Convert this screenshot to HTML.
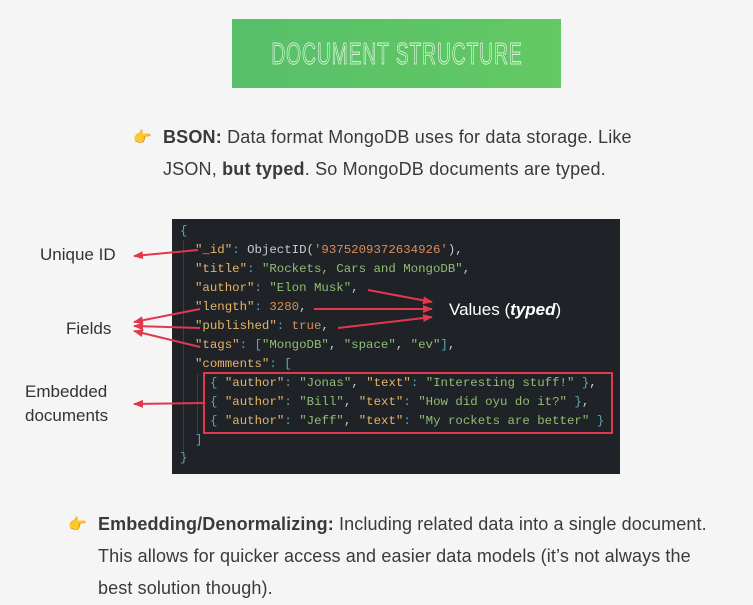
<!DOCTYPE html>
<html><head><meta charset="utf-8"><style>
body{margin:0;width:753px;height:605px;background:#f5f5f5;position:relative;overflow:hidden;font-family:"Liberation Sans",sans-serif;color:#333}
.t{position:absolute;white-space:nowrap}
.title{position:absolute;left:232px;top:19px;width:329px;height:69px;background:linear-gradient(90deg,#57bf69,#63c964)}
.title span{position:absolute;left:50%;top:50%;white-space:nowrap;font-size:31px;letter-spacing:1.5px;font-family:"Liberation Sans",sans-serif;-webkit-text-stroke:0.8px #f2fbf3;color:transparent;transform:translate(-50%,-50%) scaleX(0.62)}
.txt{font-size:18px;letter-spacing:0.18px;color:#3a3a3a}
.code{position:absolute;left:172px;top:219px;width:448px;height:255px;background:#1f2227}
.cl{position:absolute;font-family:"Liberation Mono",monospace;font-size:12.4px;white-space:pre;color:#abb2bf}
.k{color:#e5b567}.s{color:#8ebf73}.n{color:#d98e5a}.p{color:#5aa9b5}.o{color:#c8ccd2}
.lab{font-size:17px;color:#333}
.hand{font-size:15px;color:#f0a30a}
</style></head><body>
<div class="title"><span>DOCUMENT STRUCTURE</span></div>
<div class="t hand" style="left:133px;top:128px">👉</div>
<div class="t txt" style="left:163px;top:127px"><b>BSON:</b> Data format MongoDB uses for data storage. Like</div>
<div class="t txt" style="left:163px;top:159px">JSON, <b>but typed</b>. So MongoDB documents are typed.</div>

<div class="code"></div>
<div style="position:absolute;left:183px;top:240px;width:1px;height:212px;background:#3a3f47"></div>
<div style="position:absolute;left:197px;top:374px;width:1px;height:60px;background:#3a3f47"></div>
<div class="cl p" style="left:180px;top:224px">{</div>
<div class="cl" style="left:195px;top:243px"><span class="k">"_id"</span><span class="p">: </span><span class="o">ObjectID(</span><span class="n">'9375209372634926'</span><span class="o">),</span></div>
<div class="cl" style="left:195px;top:262px"><span class="k">"title"</span><span class="p">: </span><span class="s">"Rockets, Cars and MongoDB"</span><span class="o">,</span></div>
<div class="cl" style="left:195px;top:281px"><span class="k">"author"</span><span class="p">: </span><span class="s">"Elon Musk"</span><span class="o">,</span></div>
<div class="cl" style="left:195px;top:300px"><span class="k">"length"</span><span class="p">: </span><span class="n">3280</span><span class="o">,</span></div>
<div class="cl" style="left:195px;top:319px"><span class="k">"published"</span><span class="p">: </span><span class="n">true</span><span class="o">,</span></div>
<div class="cl" style="left:195px;top:338px"><span class="k">"tags"</span><span class="p">: [</span><span class="s">"MongoDB"</span><span class="o">, </span><span class="s">"space"</span><span class="o">, </span><span class="s">"ev"</span><span class="p">]</span><span class="o">,</span></div>
<div class="cl" style="left:195px;top:357px"><span class="k">"comments"</span><span class="p">: [</span></div>
<div class="cl" style="left:210px;top:376px"><span class="p">{ </span><span class="k">"author"</span><span class="p">: </span><span class="s">"Jonas"</span><span class="o">, </span><span class="k">"text"</span><span class="p">: </span><span class="s">"Interesting stuff!"</span><span class="p"> }</span><span class="o">,</span></div>
<div class="cl" style="left:210px;top:395px"><span class="p">{ </span><span class="k">"author"</span><span class="p">: </span><span class="s">"Bill"</span><span class="o">, </span><span class="k">"text"</span><span class="p">: </span><span class="s">"How did oyu do it?"</span><span class="p"> }</span><span class="o">,</span></div>
<div class="cl" style="left:210px;top:414px"><span class="p">{ </span><span class="k">"author"</span><span class="p">: </span><span class="s">"Jeff"</span><span class="o">, </span><span class="k">"text"</span><span class="p">: </span><span class="s">"My rockets are better"</span><span class="p"> }</span></div>
<div class="cl p" style="left:195px;top:433px">]</div>
<div class="cl p" style="left:180px;top:451px">}</div>
<div style="position:absolute;left:203px;top:372px;width:406px;height:58px;border:2px solid #e2384e"></div>

<div class="t lab" style="left:40px;top:245px">Unique ID</div>
<div class="t lab" style="left:66px;top:319px">Fields</div>
<div class="t lab" style="left:25px;top:382px">Embedded</div>
<div class="t lab" style="left:25px;top:406px">documents</div>
<div class="t" style="left:449px;top:300px;font-size:17px;color:#fff">Values (<i><b>typed</b></i>)</div>

<svg width="753" height="605" style="position:absolute;left:0;top:0">
<defs><marker id="a" markerWidth="10" markerHeight="8" refX="9" refY="4" orient="auto" markerUnits="userSpaceOnUse"><path d="M0,0 L10,4 L0,8 z" fill="#e2384e"/></marker></defs>
<g stroke="#e2384e" stroke-width="2" fill="none" marker-end="url(#a)">
<line x1="198" y1="250" x2="134" y2="256"/>
<line x1="200" y1="309" x2="134" y2="322"/>
<line x1="200" y1="328" x2="134" y2="326"/>
<line x1="200" y1="347" x2="134" y2="331"/>
<line x1="203" y1="403" x2="134" y2="404"/>
<line x1="368" y1="290" x2="432" y2="302"/>
<line x1="314" y1="309" x2="432" y2="309"/>
<line x1="338" y1="328" x2="432" y2="317"/>
</g></svg>

<div class="t hand" style="left:68px;top:515px">👉</div>
<div class="t txt" style="left:98px;top:514px;letter-spacing:0.12px"><b>Embedding/Denormalizing:</b> Including related data into a single document.</div>
<div class="t txt" style="left:98px;top:546px;letter-spacing:0.12px">This allows for quicker access and easier data models (it’s not always the</div>
<div class="t txt" style="left:98px;top:578px;letter-spacing:0.12px">best solution though).</div>
</body></html>
